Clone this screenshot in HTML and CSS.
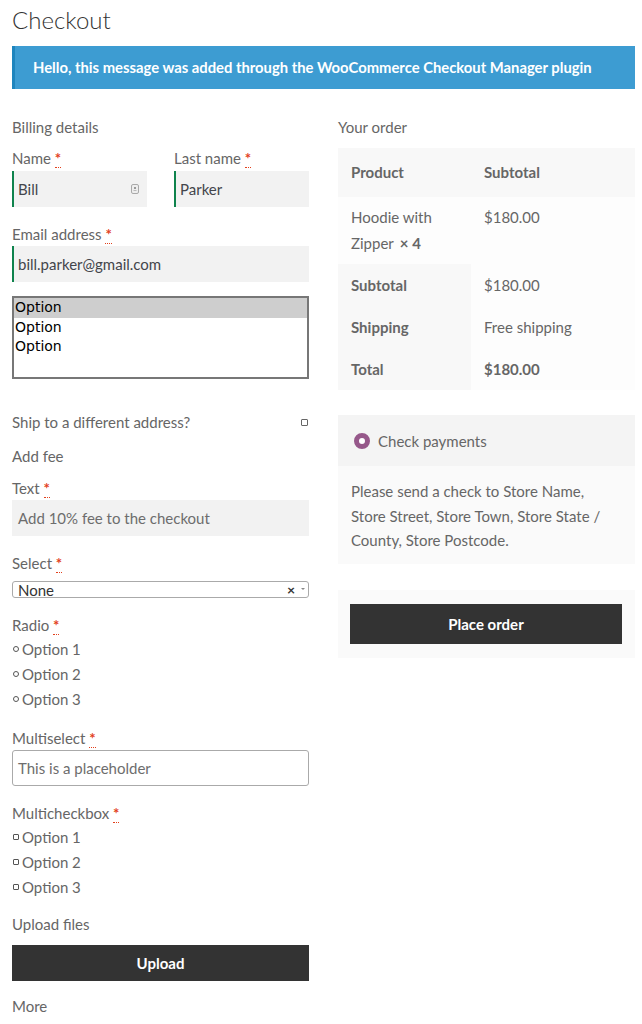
FILE: index.html
```html
<!DOCTYPE html>
<html lang="en">
<head>
<meta charset="utf-8">
<title>Checkout</title>
<link rel="stylesheet" href="styles.css">
</head>
<body>
<div class="page">
  <h1 class="title">Checkout</h1>
  <div class="notice">Hello, this message was added through the WooCommerce Checkout Manager plugin</div>

  <div class="cols">
    <div class="col-left">
      <div class="section-title">Billing details</div>

      <div class="row2">
        <div class="field">
          <label class="lbl">Name <abbr class="req">*</abbr></label>
          <div class="input green">
            <span>Bill</span>
            <svg class="cred" width="8" height="10" viewBox="0 0 8 10"><rect x="0.5" y="0.5" width="7" height="9" rx="1.5" fill="#eee" stroke="#aaa"/><rect x="3" y="3" width="2" height="2" fill="#999"/><rect x="2.5" y="6" width="3" height="1" fill="#bbb"/></svg>
          </div>
        </div>
        <div class="field">
          <label class="lbl">Last name <abbr class="req">*</abbr></label>
          <div class="input green"><span>Parker</span></div>
        </div>
      </div>

      <div class="field f-email">
        <label class="lbl">Email address <abbr class="req">*</abbr></label>
        <div class="input green"><span>bill.parker@gmail.com</span></div>
      </div>

      <div class="listbox">
        <div class="opt sel">Option</div>
        <div class="opt">Option</div>
        <div class="opt">Option</div>
      </div>

      <div class="ship">
        <span>Ship to a different address?</span>
        <span class="cb"></span>
      </div>

      <div class="plain addfee">Add fee</div>

      <div class="field f-text">
        <label class="lbl">Text <abbr class="req">*</abbr></label>
        <div class="input"><span class="ph">Add 10% fee to the checkout</span></div>
      </div>

      <div class="field f-select">
        <label class="lbl">Select <abbr class="req">*</abbr></label>
        <div class="select2">
          <span class="sv">None</span>
          <span class="sx">×</span>
          <span class="sa"></span>
        </div>
      </div>

      <div class="field f-radio">
        <label class="lbl">Radio <abbr class="req">*</abbr></label>
        <div class="choice"><span class="rd"></span>Option 1</div>
        <div class="choice"><span class="rd"></span>Option 2</div>
        <div class="choice"><span class="rd"></span>Option 3</div>
      </div>

      <div class="field f-multi">
        <label class="lbl">Multiselect <abbr class="req">*</abbr></label>
        <div class="multibox"><span class="ph">This is a placeholder</span></div>
      </div>

      <div class="field f-mcb">
        <label class="lbl">Multicheckbox <abbr class="req">*</abbr></label>
        <div class="choice"><span class="sq"></span>Option 1</div>
        <div class="choice"><span class="sq"></span>Option 2</div>
        <div class="choice"><span class="sq"></span>Option 3</div>
      </div>

      <div class="plain upl">Upload files</div>
      <div class="btn upload-btn">Upload</div>
      <div class="plain more">More</div>
    </div>

    <div class="col-right">
      <div class="section-title">Your order</div>
      <table class="order">
        <thead>
          <tr class="head"><th>Product</th><th>Subtotal</th></tr>
        </thead>
        <tbody>
          <tr class="item">
            <td><div>Hoodie with</div><div><span>Zipper</span><strong class="qty">×&nbsp;4</strong></div></td>
            <td>$180.00</td>
          </tr>
        </tbody>
        <tfoot>
          <tr><th>Subtotal</th><td>$180.00</td></tr>
          <tr><th>Shipping</th><td>Free shipping</td></tr>
          <tr><th>Total</th><td><strong>$180.00</strong></td></tr>
        </tfoot>
      </table>

      <div class="payment">
        <div class="pay-head"><span class="pr"></span>Check payments</div>
        <div class="pay-desc">Please send a check to Store Name, Store Street, Store Town, Store State / County, Store Postcode.</div>
      </div>

      <div class="place">
        <div class="btn place-btn">Place order</div>
      </div>
    </div>
  </div>
</div>
</body>
</html>
```

FILE: styles.css
```css
html, body {
  margin: 0;
  padding: 0;
  background: #ffffff;
}
body {
  font-family: Lato, "Noto Sans", sans-serif;
  font-size: 15px;
  color: #666666;
}
.page {
  padding: 0 7px 0 12px;
}
.title {
  margin: 0;
  padding-top: 5px;
  font-size: 24px;
  line-height: 30px;
  font-weight: 300;
  color: #333333;
}
.notice {
  margin-top: 11px;
  height: 43px;
  box-sizing: border-box;
  background: #3d9cd2;
  border-left: 3px solid #1e85be;
  color: #ffffff;
  font-weight: 700;
  font-size: 14.8px;
  line-height: 43px;
  padding-left: 18px;
  white-space: nowrap;
}
.cols {
  display: grid;
  grid-template-columns: 297px 297px;
  column-gap: 29px;
  margin-top: 28px;
  align-items: start;
}
.section-title {
  line-height: 20px;
  height: 20px;
}
.lbl {
  display: block;
  line-height: 20px;
  margin-bottom: 3px;
}
.req {
  color: #e2401c;
  text-decoration: none;
  border-bottom: 1px dotted #e2401c;
  font-weight: 700;
}
.row2 {
  display: grid;
  grid-template-columns: 135px 135px;
  column-gap: 27px;
  margin-top: 11px;
}
.input {
  height: 36px;
  box-sizing: border-box;
  background: #f2f2f2;
  display: flex;
  align-items: center;
  justify-content: space-between;
  padding: 0 8px 0 6px;
  color: #43454b;
  font-size: 15px;
}
.input.green {
  border-left: 2px solid #0f834d;
  padding-left: 4px;
}
.ph {
  color: #6d6d6d;
}
.cred {
  display: block;
}
.f-email {
  margin-top: 17px;
}
.f-email .lbl {
  margin-bottom: 2px;
}
.listbox {
  margin-top: 14px;
  height: 83px;
  box-sizing: border-box;
  border: 2px solid #777777;
  background: #ffffff;
  font-family: "DejaVu Sans", sans-serif;
  font-size: 14px;
  color: #000000;
}
.opt {
  height: 19.5px;
  line-height: 19.5px;
  padding-left: 1px;
}
.opt.sel {
  background: #cecece;
}
.ship {
  margin-top: 33px;
  display: flex;
  justify-content: space-between;
  align-items: center;
  line-height: 20px;
}
.cb {
  width: 5px;
  height: 5px;
  border: 1px solid #666;
  border-radius: 1px;
  margin-right: 1px;
}
.plain {
  line-height: 20px;
}
.addfee {
  margin-top: 14px;
}
.f-text {
  margin-top: 12px;
}
.f-text .lbl {
  margin-bottom: 2px;
}
.f-select {
  margin-top: 17px;
}
.f-select .lbl {
  margin-bottom: 8px;
}
.select2 {
  height: 17px;
  box-sizing: border-box;
  border: 1px solid #aaaaaa;
  border-radius: 3px;
  display: flex;
  align-items: flex-start;
  overflow: hidden;
  color: #333;
  font-size: 15px;
}
.sv {
  flex: 1;
  line-height: 17px;
  padding-left: 5px;
}
.sx {
  font-weight: 700;
  font-size: 14px;
  line-height: 15px;
  color: #333;
  margin-right: 6px;
}
.sa {
  width: 0;
  height: 0;
  border-left: 2px solid transparent;
  border-right: 2px solid transparent;
  border-top: 2px solid #888;
  margin-top: 6px;
  margin-right: 3px;
}
.f-radio {
  margin-top: 17px;
}
.f-radio .lbl {
  margin-bottom: 2px;
}
.choice {
  display: flex;
  align-items: center;
  height: 24.7px;
  line-height: 24px;
}
.rd {
  width: 4px;
  height: 4px;
  border: 1.6px solid #555;
  border-radius: 50%;
  margin: 0 3px 0 1px;
}
.sq {
  width: 4px;
  height: 4px;
  border: 1.6px solid #555;
  border-radius: 1px;
  margin: 0 3px 0 1px;
}
.f-multi {
  margin-top: 17px;
}
.f-multi .lbl {
  margin-bottom: 2px;
}
.multibox {
  height: 36px;
  box-sizing: border-box;
  border: 1px solid #aaaaaa;
  border-radius: 3px;
  display: flex;
  align-items: center;
  padding-left: 5px;
}
.f-mcb {
  margin-top: 17px;
}
.f-mcb .lbl {
  margin-bottom: 2px;
}
.upl {
  margin-top: 15px;
}
.btn {
  background: #333333;
  color: #ffffff;
  font-weight: 700;
  text-align: center;
}
.upload-btn {
  margin-top: 11px;
  height: 36px;
  line-height: 36px;
}
.more {
  margin-top: 15px;
}

/* right column */
.order {
  margin-top: 11px;
  width: 100%;
  border-collapse: collapse;
  border-spacing: 0;
}
.order th, .order td {
  text-align: left;
  vertical-align: top;
  padding: 0 13px;
  font-size: 15px;
}
.order th {
  font-weight: 700;
  color: #666666;
}
.order thead th {
  background: #f8f8f8;
  height: 49px;
  line-height: 49px;
  padding-top: 0;
  padding-bottom: 0;
}
.order thead th:first-child {
  width: 107px;
}
.order .item td {
  background: #fdfdfd;
  height: 67px;
  box-sizing: border-box;
  padding-top: 7px;
  padding-bottom: 8px;
  line-height: 26px;
}
.order .qty {
  font-weight: 700;
  margin-left: 6px;
}
.order tfoot th {
  background: #f8f8f8;
  height: 42px;
  line-height: 42px;
}
.order tfoot td {
  background: #fdfdfd;
  height: 42px;
  line-height: 42px;
}
.order tfoot strong {
  font-weight: 700;
}
.payment {
  margin-top: 25px;
}
.pay-head {
  height: 51px;
  background: #f4f4f4;
  display: flex;
  align-items: center;
  padding-left: 16px;
}
.pr {
  width: 6px;
  height: 6px;
  border: 5px solid #96588a;
  border-radius: 50%;
  background: #fff;
  margin-right: 8px;
}
.pay-desc {
  background: #fafafa;
  padding: 13px 13px 11px;
  line-height: 24.5px;
}
.place {
  margin-top: 26px;
  background: #fafafa;
  padding: 14px 13px 14px 12px;
}
.place-btn {
  height: 40px;
  line-height: 40px;
}
```
